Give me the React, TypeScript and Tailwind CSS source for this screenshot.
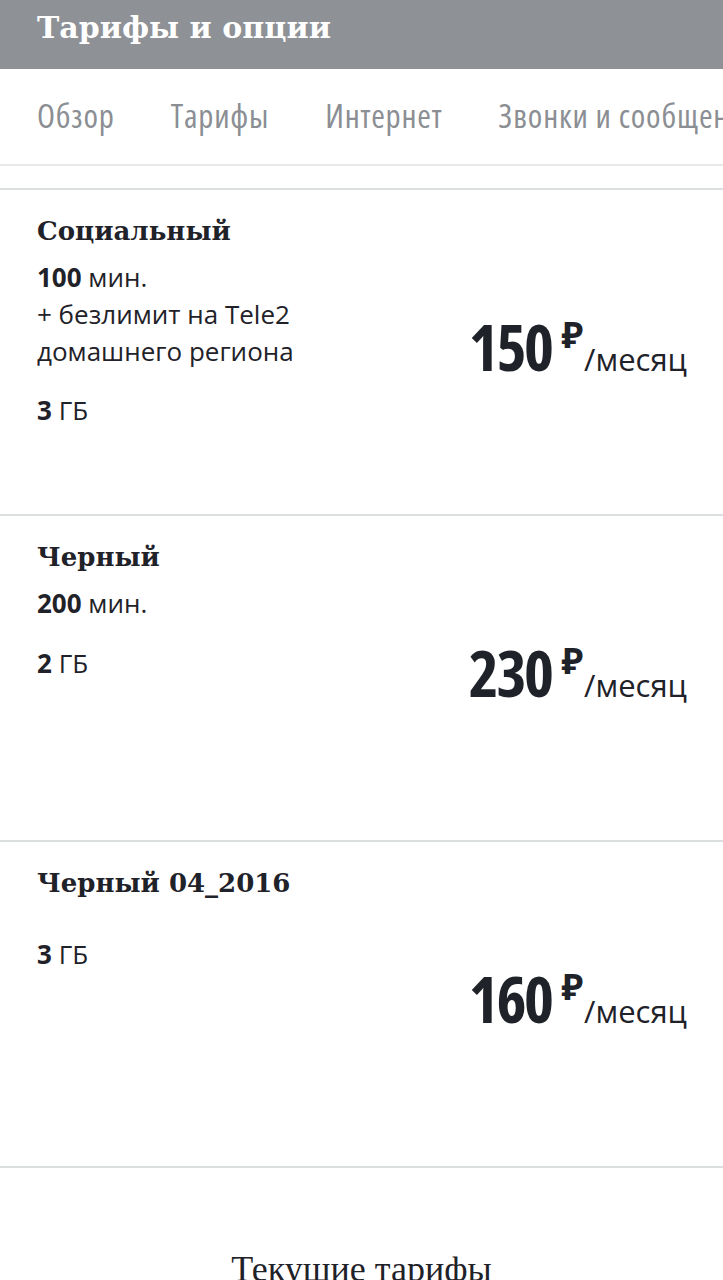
import React from "react";

const sans = { fontFamily: '"Open Sans", "Noto Sans", sans-serif' } as React.CSSProperties;
const sansCond = { fontFamily: '"Open Sans", "Noto Sans", sans-serif', fontStretch: "75%" } as React.CSSProperties;
const serif = { fontFamily: '"DejaVu Serif", "Liberation Serif", serif' } as React.CSSProperties;

type Tariff = {
  name: string;
  lines: React.ReactNode[];
  gb: string;
  price: string;
  gbMargin: string;
};

const tariffs: Tariff[] = [
  {
    name: "Социальный",
    lines: [
      <span key="a"><b className="font-bold">100</b> мин.</span>,
      <span key="b">+ безлимит на Tele2</span>,
      <span key="c">домашнего региона</span>,
    ],
    gb: "3",
    price: "150",
    gbMargin: "mt-[22px]",
  },
  {
    name: "Черный",
    lines: [<span key="a"><b className="font-bold">200</b> мин.</span>],
    gb: "2",
    price: "230",
    gbMargin: "mt-[23px]",
  },
  {
    name: "Черный 04_2016",
    lines: [],
    gb: "3",
    price: "160",
    gbMargin: "mt-[25px]",
  },
];

function Card({ t }: { t: Tariff }) {
  return (
    <div className="h-[326px] border-b-2 border-[#dcdfdf] flex flex-row pl-[37px] pr-[36px]">
      <div className="flex-1 pt-[23px] flex flex-col text-[#1f2229]">
        <div className="text-[26px] leading-[36px] font-bold" style={serif}>
          {t.name}
        </div>
        <div className="mt-[10px] flex flex-col text-[26px] leading-[37px]" style={sans}>
          {t.lines.map((l, i) => (
            <div key={i}>{l}</div>
          ))}
          <div className={t.gbMargin}>
            <b className="font-bold">{t.gb}</b> ГБ
          </div>
        </div>
      </div>
      <div className="flex items-center pb-[6px] text-[#1f2229]">
        <div className="flex items-baseline">
          <span className="text-[64px] leading-none font-bold tracking-[-2.5px]" style={sansCond}>
            {t.price}
          </span>
          <span className="text-[36px] leading-none font-bold self-start mt-[2px] ml-[10px]" style={sans}>
            ₽
          </span>
          <span className="text-[31px] ml-[1px]" style={sans}>
            /месяц
          </span>
        </div>
      </div>
    </div>
  );
}

export default function App() {
  return (
    <div className="w-[723px] h-[1280px] overflow-hidden bg-white">
      <div className="h-[69px] bg-[#8e9196] pl-[37px] pt-[7px]">
        <div className="text-white text-[30px] leading-[42px] font-bold" style={serif}>
          Тарифы и опции
        </div>
      </div>
      <div className="h-[95px] flex items-center gap-[56px] pl-[37px] pb-[2px] whitespace-nowrap overflow-hidden text-[33px] tracking-[0.8px] text-[#8b8e93]" style={sansCond}>
        <span>Обзор</span>
        <span>Тарифы</span>
        <span>Интернет</span>
        <span>Звонки и сообщения</span>
      </div>
      <div className="h-[24px] border-t-2 border-[#e7e8e8]" />
      <div className="border-t-2 border-[#dcdfdf]">
        {tariffs.map((t) => (
          <Card key={t.name} t={t} />
        ))}
      </div>
      <div className="pt-[74px] text-center text-[36px] text-[#1f2229]" style={{ fontFamily: '"Liberation Serif", serif' }}>
        Текущие тарифы
      </div>
    </div>
  );
}
